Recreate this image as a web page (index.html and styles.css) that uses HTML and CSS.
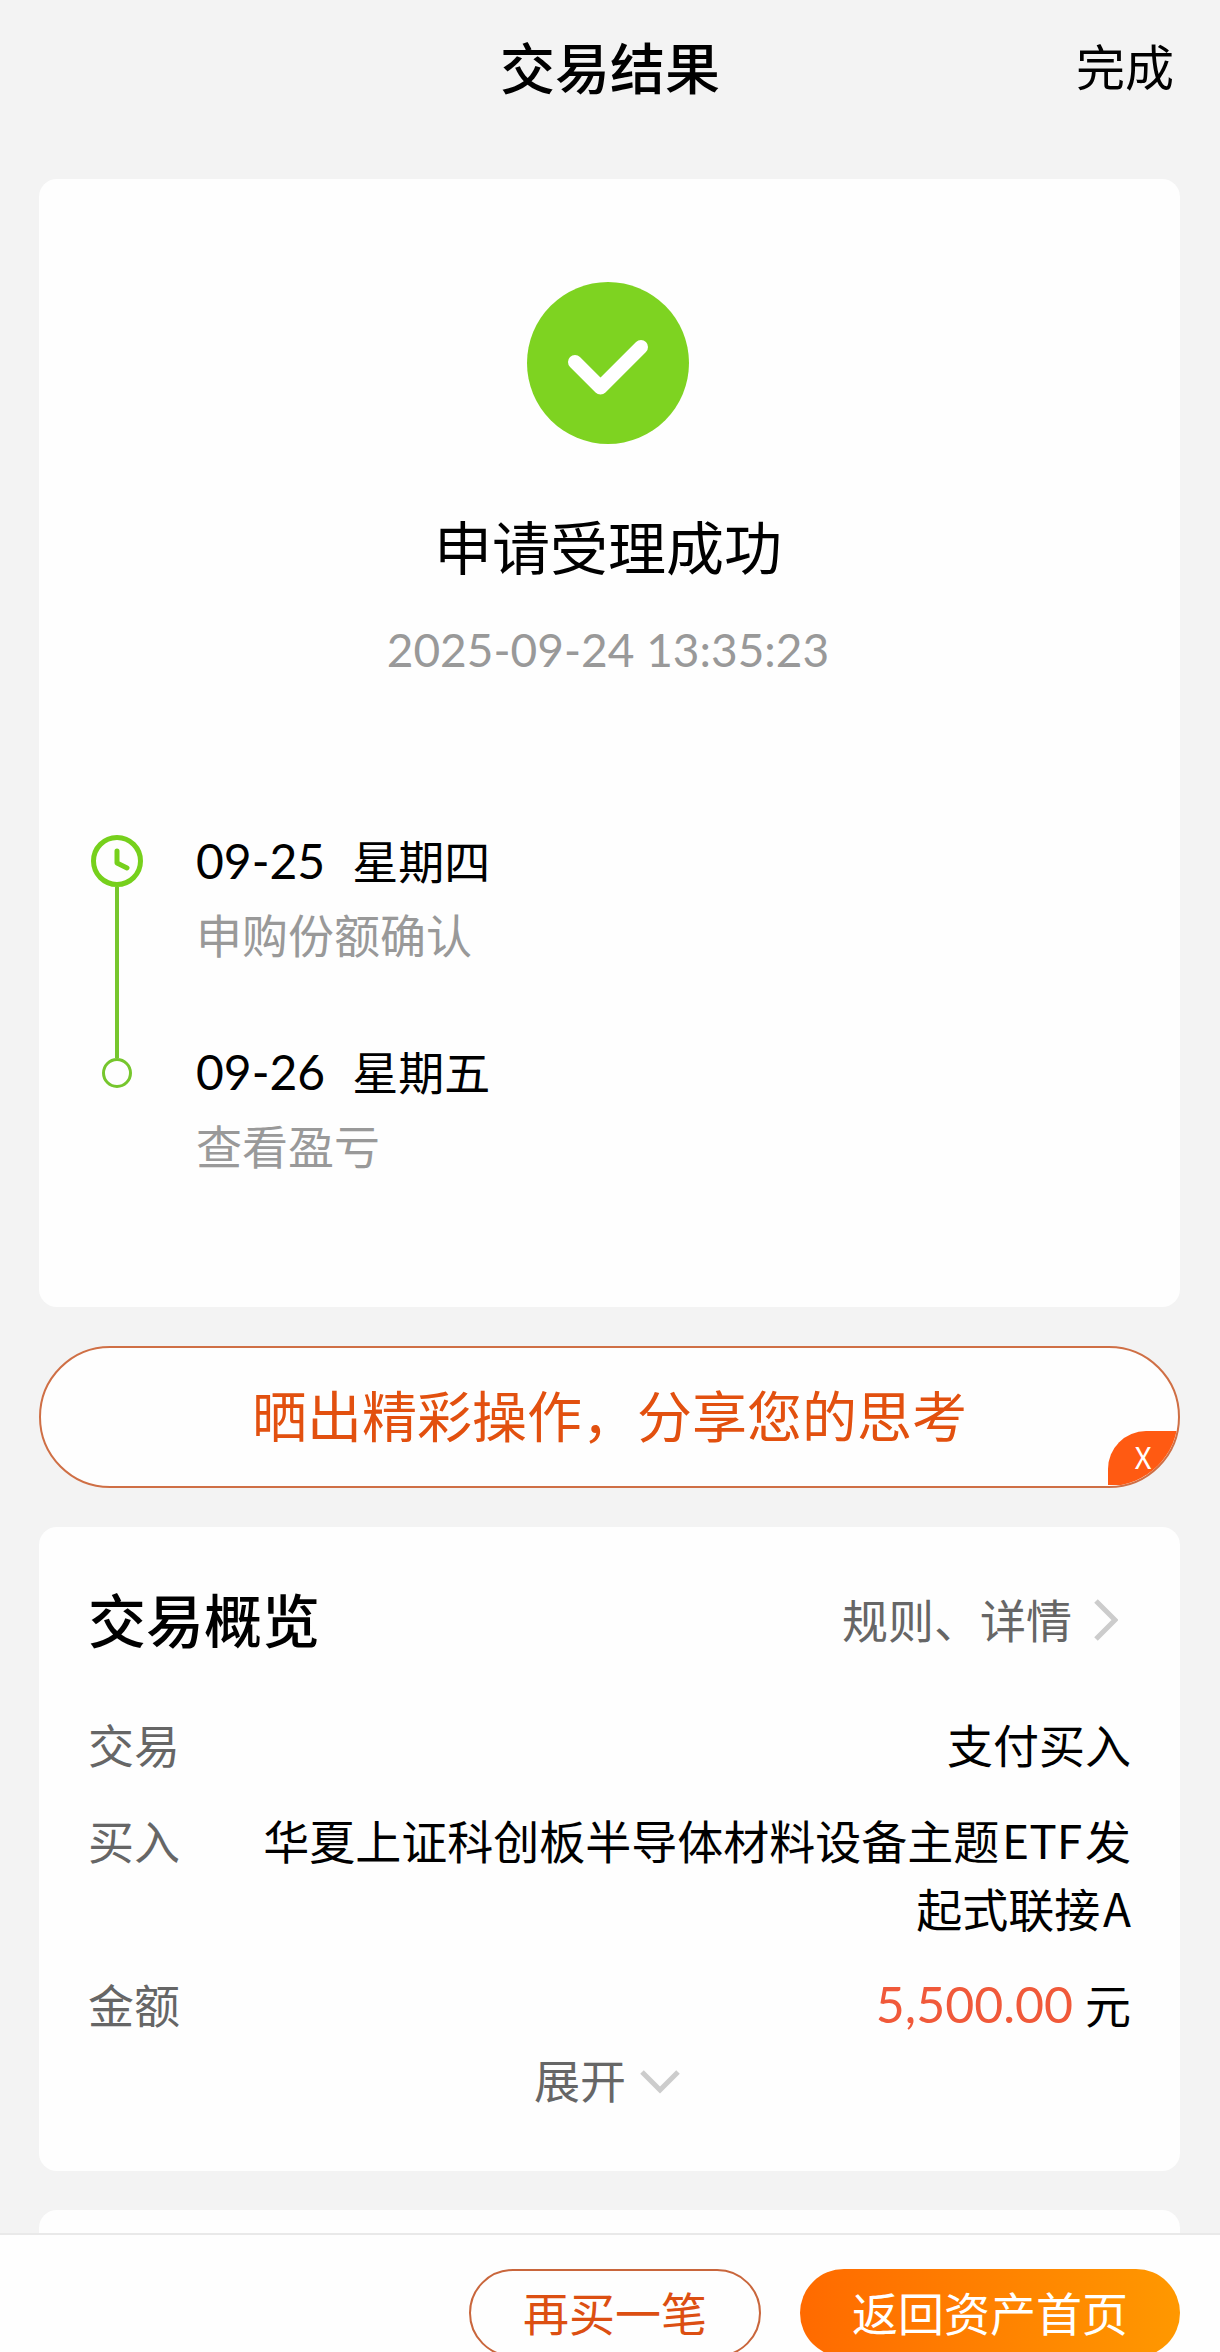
FILE: index.html
```
<!DOCTYPE html>
<html lang="zh-CN">
<head>
    <meta charset="UTF-8">
    <meta name="viewport" content="width=device-width, initial-scale=1.0">
    <title>交易结果</title>
    <link rel="stylesheet" href="styles.css">
</head>
<body>
    <header class="header">
        <h1>交易结果</h1>
        <button type="button" class="done">完成</button>
    </header>

    <main class="content">
        <section class="card result">
            <svg class="result-icon" viewBox="0 0 162 162" aria-hidden="true">
                <circle cx="81" cy="81" r="81" fill="#7ed321"/>
                <path d="M48 80 L73.500 105.500 L114 65" fill="none" stroke="#fff" stroke-width="14" stroke-linecap="round" stroke-linejoin="round"/>
            </svg>
            <h2>申请受理成功</h2>
            <time class="result-time">2025-09-24 13:35:23</time>

            <ol class="timeline">
                <li class="step">
                    <div class="step-mark">
                        <svg class="clock" viewBox="0 0 52 52" aria-hidden="true">
                            <circle cx="26" cy="26" r="23.500" fill="none" stroke="#76d01c" stroke-width="5"/>
                            <path d="M26 16 V28 L36 33" fill="none" stroke="#76d01c" stroke-width="5" stroke-linecap="round" stroke-linejoin="round"/>
                        </svg>
                        <span class="line"></span>
                    </div>
                    <div class="step-text">
                        <p class="step-date"><span class="num">09-25</span><span>星期四</span></p>
                        <p class="step-note">申购份额确认</p>
                    </div>
                </li>
                <li class="step">
                    <div class="step-mark step-mark-last">
                        <span class="line line-short"></span>
                        <span class="dot"></span>
                    </div>
                    <div class="step-text">
                        <p class="step-date"><span class="num">09-26</span><span>星期五</span></p>
                        <p class="step-note">查看盈亏</p>
                    </div>
                </li>
            </ol>
        </section>

        <div class="share">
            <button type="button" class="share-btn">晒出精彩操作，分享您的思考</button>
            <button type="button" class="share-close" aria-label="关闭">X</button>
        </div>

        <section class="card overview">
            <div class="overview-head">
                <h2>交易概览</h2>
                <a href="#" class="rules">规则、详情
                    <svg class="arrow-right" viewBox="0 0 24 42" aria-hidden="true">
                        <path d="M2 2 L21 21 L2 40" fill="none" stroke="#ccc" stroke-width="5"/>
                    </svg>
                </a>
            </div>
            <dl class="rows">
                <div class="row">
                    <dt>交易</dt>
                    <dd>支付买入</dd>
                </div>
                <div class="row">
                    <dt>买入</dt>
                    <dd>华夏上证科创板半导体材料设备主题&hairsp;ETF&hairsp;发起式联接&hairsp;A</dd>
                </div>
                <div class="row">
                    <dt>金额</dt>
                    <dd class="amount"><span class="money">5,500.00</span><span>元</span></dd>
                </div>
            </dl>
            <button type="button" class="expand">展开
                <svg class="arrow-down" viewBox="0 0 40 24" aria-hidden="true">
                    <path d="M2 2 L20 20 L38 2" fill="none" stroke="#ccc" stroke-width="5"/>
                </svg>
            </button>
        </section>

        <section class="card next-card"></section>
    </main>

    <footer class="footer">
        <button type="button" class="btn btn-outline">再买一笔</button>
        <button type="button" class="btn btn-primary">返回资产首页</button>
    </footer>
</body>
</html>
```
FILE: styles.css
```
* {
    box-sizing: border-box;
}
body {
    display: flex;
    flex-direction: column;
    height: 100vh;
    margin: 0;
    overflow: hidden;
    background-color: #f3f3f3;
    color: #000;
    font-family: "Noto Sans CJK SC", sans-serif;
    font-size: 46px;
    line-height: 68px;
}
h1, h2, p, ol, dl, dd {
    margin: 0;
    padding: 0;
}
button {
    padding: 0;
    border: none;
    background: none;
    color: inherit;
    font: inherit;
    cursor: pointer;
}
svg {
    display: block;
    flex: none;
}

/* header */
.header {
    display: grid;
    grid-template-columns: 1fr auto 1fr;
    align-items: center;
    flex: none;
    height: 130px;
    padding: 0 46px;
}
.header h1 {
    grid-column: 2;
    font-size: 55px;
    font-weight: 500;
}
.done {
    justify-self: end;
    font-size: 49px;
}

.content {
    flex: 1;
    min-height: 0;
    padding: 49px 40px 0 39px;
    overflow: hidden;
}
.card {
    border-radius: 18px;
    background-color: #fefefe;
}

/* result */
.result {
    display: flex;
    flex-direction: column;
    align-items: center;
    padding: 103px 53px 129px 50px;
}
.result-icon {
    width: 162px;
    height: 162px;
}
.result h2 {
    margin-top: 61px;
    font-size: 58px;
    font-weight: 400;
    line-height: 80px;
}
.result-time {
    margin-top: 35px;
    color: #999;
    font-family: Lato, "Noto Sans CJK SC", sans-serif;
    font-size: 46px;
    line-height: 60px;
}
.timeline {
    width: 100%;
    margin-top: 143px;
    list-style: none;
}
.step {
    display: flex;
    gap: 51px;
    height: 211px;
}
.step:last-child {
    height: 144px;
}
.step-mark {
    display: flex;
    flex-direction: column;
    align-items: center;
    width: 56px;
    padding-top: 12px;
}
.step-mark-last {
    padding-top: 0;
}
.clock {
    width: 52px;
    height: 52px;
}
.line {
    flex: 1;
    width: 4px;
    background-color: #76c62d;
}
.line-short {
    flex: none;
    height: 24px;
}
.dot {
    width: 30px;
    height: 30px;
    border: 3px solid #76c62d;
    border-radius: 50%;
}
.step-text {
    line-height: 72px;
}
.step-date {
    display: flex;
    align-items: baseline;
    gap: 27px;
}
.num {
    font-family: Lato, "Noto Sans CJK SC", sans-serif;
    font-size: 48px;
}
.step-note {
    color: #999;
}

/* share */
.share {
    position: relative;
    height: 142px;
    margin: 39px 0;
    border: 2px solid #cf6f45;
    border-radius: 71px;
    background-color: #fefefe;
    overflow: hidden;
}
.share-btn {
    width: 100%;
    height: 100%;
    padding-bottom: 8px;
    color: #e2500f;
    font-size: 55px;
}
.share-close {
    position: absolute;
    right: 0;
    bottom: 1px;
    width: 70px;
    height: 54px;
    padding-bottom: 4px;
    border-top-left-radius: 38px;
    background-color: #ff5a12;
    color: #fff;
    font-size: 30px;
    line-height: 50px;
}

/* overview */
.overview {
    display: flex;
    flex-direction: column;
    padding: 51px 49px 59px;
}
.overview-head {
    display: flex;
    align-items: center;
    justify-content: space-between;
}
.overview-head h2 {
    font-size: 58px;
    font-weight: 500;
    line-height: 80px;
}
.rules {
    display: flex;
    align-items: center;
    gap: 22px;
    padding-right: 13px;
    color: #666;
    text-decoration: none;
}
.arrow-right {
    width: 24px;
    height: 42px;
    margin-top: 4px;
}
.rows {
    display: flex;
    flex-direction: column;
    gap: 28px;
    margin-top: 51px;
}
.row {
    display: flex;
    justify-content: space-between;
    gap: 72px;
}
.row dt {
    flex: none;
    color: #666;
}
.row dd {
    text-align: right;
}
.row .amount {
    display: flex;
    align-items: baseline;
    gap: 12px;
}
.money {
    color: #f0593a;
    font-family: Lato, "Noto Sans CJK SC", sans-serif;
    font-size: 50px;
}
.expand {
    display: flex;
    align-items: center;
    align-self: center;
    gap: 14px;
    margin: 6px 5px 0 0;
    color: #666;
}
.arrow-down {
    width: 40px;
    height: 24px;
    margin-top: 8px;
}

.next-card {
    height: 200px;
    margin-top: 39px;
}

/* footer */
.footer {
    display: flex;
    flex: none;
    justify-content: flex-end;
    gap: 39px;
    height: 119px;
    padding: 34px 40px 0;
    border-top: 2px solid #e9e9e9;
    background-color: #fefefe;
    overflow: hidden;
}
.btn {
    flex: none;
    height: 88px;
    padding: 0 52px 4px;
    border-radius: 44px;
}
.btn-outline {
    border: 2px solid #c9663c;
    color: #dc4f12;
}
.btn-primary {
    background-image: linear-gradient(to right, #ff6a00, #ff9800);
    color: #fff;
}
```
